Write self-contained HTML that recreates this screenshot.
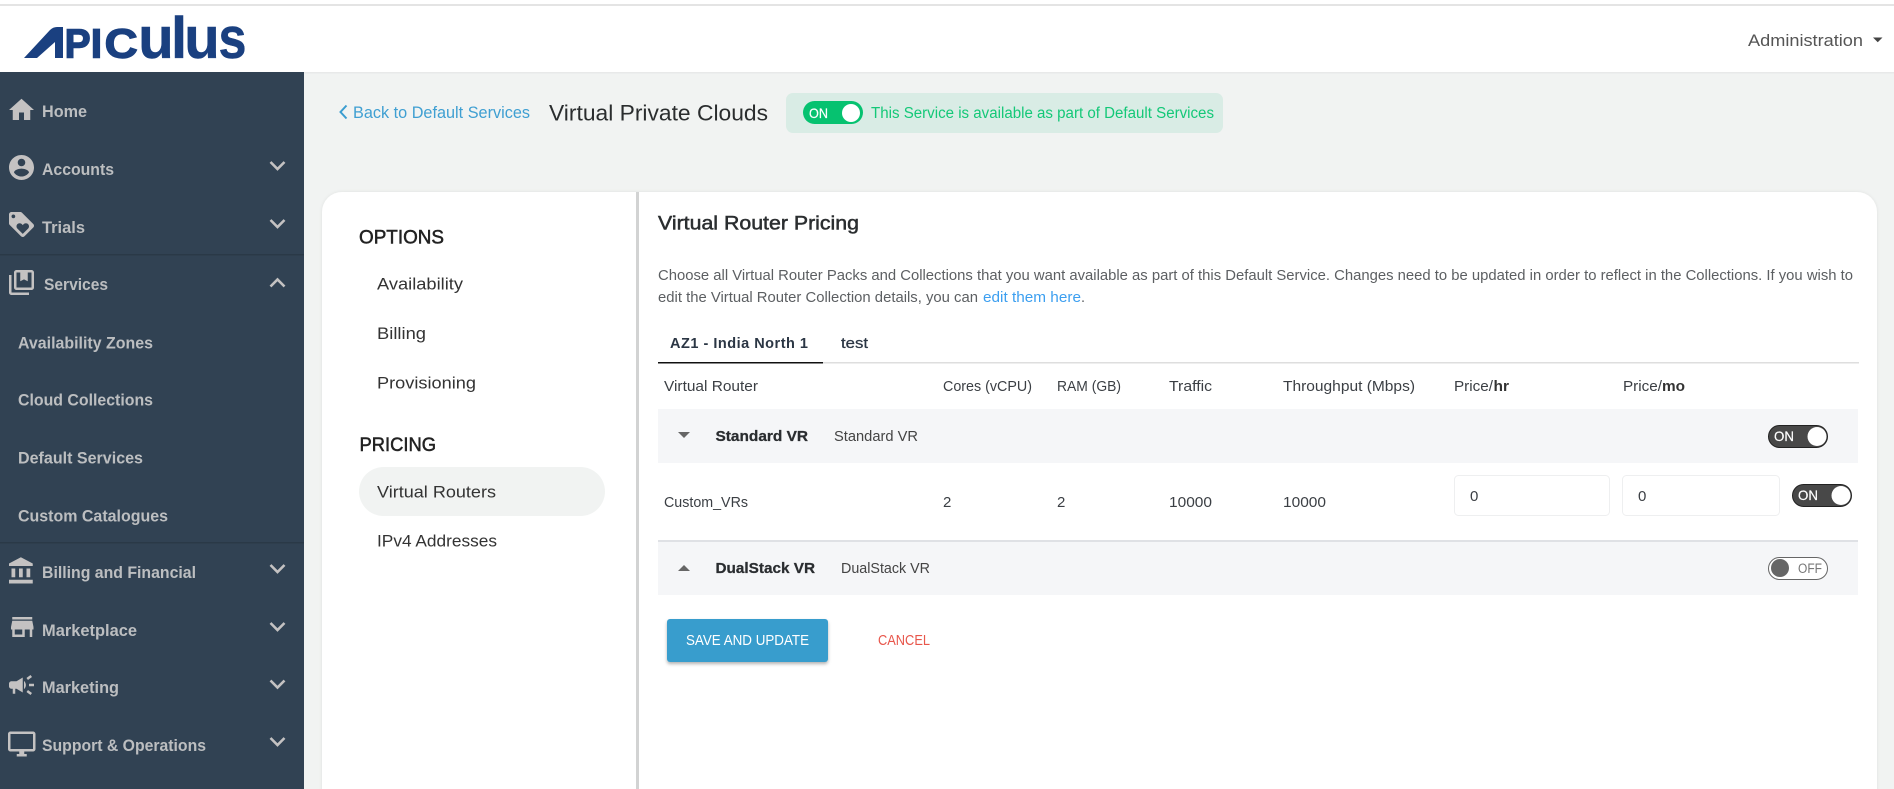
<!DOCTYPE html>
<html lang="en"><head><meta charset="utf-8"><title>Virtual Private Clouds</title>
<style>
html,body{margin:0;padding:0;width:1894px;height:789px;overflow:hidden;background:#f1f3f2}
svg{display:block}
text{font-family:"Liberation Sans",sans-serif}
.side{font-size:16.5px;font-weight:700;fill:#bcbec0}
.ic{fill:#c4c2c2}
.chev{fill:none;stroke:#c4c2c2;stroke-width:2.6}
.b{font-size:15px;fill:#3b3f44}
.d{font-size:17px;fill:#333}
.h{font-size:19px;fill:#222;stroke:#222;stroke-width:.5px}
.g{font-size:14.5px;fill:#444}
.s{font-size:14.5px;font-weight:700;fill:#2a2d30;stroke:#2a2d30;stroke-width:.25px}
.lg{font-weight:700;fill:#1a4080;stroke:#1a4080;stroke-width:.5px}
.lc{font-weight:700;fill:#1a4080;stroke:#1a4080;stroke-width:1.4px}
</style></head><body>
<svg width="1894" height="789" viewBox="0 0 1894 789" xmlns="http://www.w3.org/2000/svg">
<defs>
<filter id="sh" x="-10%" y="-20%" width="120%" height="150%"><feDropShadow dx="0" dy="2" stdDeviation="1.5" flood-color="#000" flood-opacity=".3"/></filter>
<filter id="sh2" x="-2%" y="-2%" width="104%" height="104%"><feDropShadow dx="0" dy="0" stdDeviation="1.5" flood-color="#000" flood-opacity=".08"/></filter>
</defs>
<rect width="1894" height="789" fill="#f1f3f2"/>
<rect x="0" y="0" width="1894" height="72" fill="#fff"/>
<rect x="0" y="4" width="1894" height="2" fill="#e4e4e4"/>
<rect x="0" y="72" width="1894" height="1.5" fill="#e8e9e9"/>

<!-- logo -->
<path d="M24 58L50 30Q53 27 57 27H63V58H55V42L37 58Z" fill="#1a4080"/>
<text class="lc" x="64.6" y="57.4" font-size="41" textLength="26" lengthAdjust="spacingAndGlyphs">P</text>
<text class="lc" x="90.8" y="57.4" font-size="41">I</text>
<text class="lc" x="104.6" y="57.4" font-size="41" textLength="33" lengthAdjust="spacingAndGlyphs">C</text>
<text class="lg" x="138.2" y="58" font-size="58">u</text>
<text class="lg" x="171" y="58" font-size="58">l</text>
<text class="lg" x="184.2" y="58" font-size="58">u</text>
<text class="lg" x="218.5" y="58" font-size="58" textLength="28" lengthAdjust="spacingAndGlyphs">s</text>

<text x="1748" y="46" font-size="17" fill="#555" textLength="115" lengthAdjust="spacingAndGlyphs">Administration</text>
<path d="M1873 37.5h9.5l-4.75 4.75z" fill="#444"/>

<!-- sidebar -->
<rect x="0" y="72" width="304" height="717" fill="#314253"/>
<rect x="0" y="254" width="304" height="1.5" fill="#2a3947"/>
<rect x="0" y="542" width="304" height="1.5" fill="#2a3947"/>

<g class="ic">
<path transform="translate(6.5 95) scale(1.25)" d="M10 20v-6h4v6h5v-8h3L12 3 2 12h3v8z"/>
<path transform="translate(6.5 152.5) scale(1.25)" d="M12 2C6.48 2 2 6.48 2 12s4.48 10 10 10 10-4.48 10-10S17.52 2 12 2zm0 3c1.66 0 3 1.34 3 3s-1.34 3-3 3-3-1.34-3-3 1.34-3 3-3zm0 14.2c-2.5 0-4.71-1.28-6-3.22.03-1.99 4-3.08 6-3.08 1.99 0 5.97 1.09 6 3.08-1.29 1.94-3.5 3.22-6 3.22z"/>
<path transform="translate(6.5 209.5) scale(1.25)" d="M21.41 11.58l-9-9C12.05 2.22 11.55 2 11 2H4c-1.1 0-2 .9-2 2v7c0 .55.22 1.05.59 1.42l9 9c.36.36.86.58 1.41.58.55 0 1.05-.22 1.41-.59l7-7c.37-.36.59-.86.59-1.41 0-.55-.23-1.06-.59-1.42zM5.5 7C4.67 7 4 6.33 4 5.5S4.67 4 5.5 4 7 4.67 7 5.5 6.33 7 5.5 7zm11.77 8.27L13 19.54l-4.27-4.27C8.28 14.81 8 14.19 8 13.5c0-1.38 1.12-2.5 2.5-2.5.69 0 1.32.28 1.77.74l.73.72.73-.73c.45-.45 1.08-.73 1.77-.73 1.38 0 2.5 1.12 2.5 2.5 0 .69-.28 1.32-.73 1.77z"/>
<path transform="translate(6.5 267.5) scale(1.25)" fill-rule="evenodd" d="M4 6H2v14c0 1.1.9 2 2 2h14v-2H4V6zM20 2H8c-1.1 0-2 .9-2 2v12c0 1.1.9 2 2 2h12c1.1 0 2-.9 2-2V4c0-1.1-.9-2-2-2zM8 4h3v7l3-1.5 3 1.5V4h3v12H8z"/>
<path transform="translate(6.5 556) scale(1.25)" d="M4 10v7h3v-7H4zm6 0v7h3v-7h-3zM2 22h19v-3H2v3zm14-12v7h3v-7h-3zm-4.5-9L2 6v2h19V6l-9.5-5z"/>
<path transform="translate(7.25 612) scale(1.25)" d="M20 4H4v2h16V4zm1 10v-2l-1-5H4l-1 5v2h1v6h10v-6h4v6h2v-6h1zm-9 4H6v-4h6v4z"/>
<path transform="translate(6.5 670) scale(1.25)" d="M18 11v2h4v-2h-4zm-2 6.61c.96.71 2.21 1.65 3.2 2.39.4-.53.8-1.07 1.2-1.6-.99-.74-2.24-1.68-3.2-2.4-.4.54-.8 1.08-1.2 1.61zM20.4 5.6c-.4-.53-.8-1.07-1.2-1.6-.99.74-2.24 1.68-3.2 2.4.4.53.8 1.07 1.2 1.6.96-.72 2.21-1.65 3.2-2.4zM4 9c-1.1 0-2 .9-2 2v2c0 1.1.9 2 2 2h1v4h2v-4h1l5 3V6L8 9H4zm11.5 3c0-1.33-.58-2.53-1.5-3.35v6.69c.92-.81 1.5-2.01 1.5-3.34z"/>
<path transform="translate(6.75 729) scale(1.25)" d="M21 2H3c-1.1 0-2 .9-2 2v12c0 1.1.9 2 2 2h7v2H8v2h8v-2h-2v-2h7c1.1 0 2-.9 2-2V4c0-1.1-.9-2-2-2zm0 14H3V4h18v12z"/>
</g>

<text class="side" x="42" y="117" textLength="45" lengthAdjust="spacingAndGlyphs">Home</text>
<text class="side" x="42" y="175" textLength="72" lengthAdjust="spacingAndGlyphs">Accounts</text>
<text class="side" x="42" y="233" textLength="43" lengthAdjust="spacingAndGlyphs">Trials</text>
<text class="side" x="44" y="290" textLength="64" lengthAdjust="spacingAndGlyphs">Services</text>
<text class="side" x="18" y="348.5" textLength="135" lengthAdjust="spacingAndGlyphs">Availability Zones</text>
<text class="side" x="18" y="405.5" textLength="135" lengthAdjust="spacingAndGlyphs">Cloud Collections</text>
<text class="side" x="18" y="463.5" textLength="125" lengthAdjust="spacingAndGlyphs">Default Services</text>
<text class="side" x="18" y="521.5" textLength="150" lengthAdjust="spacingAndGlyphs">Custom Catalogues</text>
<text class="side" x="42" y="578" textLength="154" lengthAdjust="spacingAndGlyphs">Billing and Financial</text>
<text class="side" x="42" y="636" textLength="95" lengthAdjust="spacingAndGlyphs">Marketplace</text>
<text class="side" x="42" y="693" textLength="77" lengthAdjust="spacingAndGlyphs">Marketing</text>
<text class="side" x="42" y="751" textLength="164" lengthAdjust="spacingAndGlyphs">Support &amp; Operations</text>

<g class="chev">
<path d="M270.5 162l7 7 7-7"/>
<path d="M270.5 220l7 7 7-7"/>
<path d="M270.5 286.5l7-7 7 7"/>
<path d="M270.5 565l7 7 7-7"/>
<path d="M270.5 623l7 7 7-7"/>
<path d="M270.5 680.5l7 7 7-7"/>
<path d="M270.5 738l7 7 7-7"/>
</g>

<!-- page header -->
<path d="M346.5 105.5l-6 6.5 6 6.5" fill="none" stroke="#3a9dd0" stroke-width="2"/>
<text x="353" y="118" font-size="16.5" fill="#3f9fd2" textLength="177" lengthAdjust="spacingAndGlyphs">Back to Default Services</text>
<text x="549" y="120.5" font-size="22" fill="#2a2d2e" textLength="219" lengthAdjust="spacingAndGlyphs">Virtual Private Clouds</text>
<rect x="786" y="93" width="437" height="40" rx="7" fill="#d9ece5"/>
<rect x="803" y="101" width="60" height="23" rx="11.5" fill="#06c270"/>
<circle cx="851" cy="113" r="9" fill="#fff"/>
<text x="809" y="118" font-size="14" fill="#fff" stroke="#fff" stroke-width=".2" textLength="19" lengthAdjust="spacingAndGlyphs">ON</text>
<text x="871" y="118" font-size="15.5" fill="#14c878" textLength="343" lengthAdjust="spacingAndGlyphs">This Service is available as part of Default Services</text>

<!-- card -->
<path d="M342 192H1857a20 20 0 0 1 20 20V800H322V212a20 20 0 0 1 20-20z" fill="#fff" filter="url(#sh2)"/>
<rect x="636" y="192" width="3" height="597" fill="#d2d3d3"/>

<!-- left menu -->
<text class="h" x="359" y="243.5" textLength="85" lengthAdjust="spacingAndGlyphs">OPTIONS</text>
<text class="d" x="377" y="289.5" textLength="86" lengthAdjust="spacingAndGlyphs">Availability</text>
<text class="d" x="377" y="339" textLength="49" lengthAdjust="spacingAndGlyphs">Billing</text>
<text class="d" x="377" y="388.5" textLength="99" lengthAdjust="spacingAndGlyphs">Provisioning</text>
<text class="h" x="359.5" y="451" textLength="76.5" lengthAdjust="spacingAndGlyphs">PRICING</text>
<rect x="359" y="467" width="246" height="49" rx="24.5" fill="#f1f3f2"/>
<text class="d" x="377" y="497.5" textLength="119" lengthAdjust="spacingAndGlyphs">Virtual Routers</text>
<text class="d" x="377" y="546.5" textLength="120" lengthAdjust="spacingAndGlyphs">IPv4 Addresses</text>

<!-- content -->
<text x="658" y="229.5" font-size="19.5" fill="#2b2e30" stroke="#2b2e30" stroke-width=".5" textLength="201" lengthAdjust="spacingAndGlyphs">Virtual Router Pricing</text>
<text x="658" y="280" font-size="14.5" fill="#5c5f62" textLength="1195" lengthAdjust="spacingAndGlyphs">Choose all Virtual Router Packs and Collections that you want available as part of this Default Service. Changes need to be updated in order to reflect in the Collections. If you wish to</text>
<text x="658" y="302" font-size="14.5" fill="#5c5f62" textLength="320" lengthAdjust="spacingAndGlyphs">edit the Virtual Router Collection details, you can</text>
<text x="983" y="302" font-size="14.5" fill="#3c9ff0" textLength="98" lengthAdjust="spacingAndGlyphs">edit them here</text>
<text x="1081" y="302" font-size="14.5" fill="#5c5f62">.</text>

<text x="670" y="348" font-size="14.5" font-weight="700" fill="#2b3644" textLength="138" lengthAdjust="spacing">AZ1 - India North 1</text>
<text x="841" y="348" font-size="14.5" fill="#2b3644" stroke="#2b3644" stroke-width=".25" textLength="27" lengthAdjust="spacingAndGlyphs">test</text>
<rect x="658" y="362" width="1201" height="1.5" fill="#dedede"/>
<rect x="658" y="362" width="165" height="1.5" fill="#111"/>

<text class="b" x="664" y="391" textLength="94" lengthAdjust="spacingAndGlyphs">Virtual Router</text>
<text class="b" x="943" y="391" textLength="89" lengthAdjust="spacingAndGlyphs">Cores (vCPU)</text>
<text class="b" x="1057" y="391" textLength="64" lengthAdjust="spacingAndGlyphs">RAM (GB)</text>
<text class="b" x="1169" y="391" textLength="43" lengthAdjust="spacingAndGlyphs">Traffic</text>
<text class="b" x="1283" y="391" textLength="132" lengthAdjust="spacingAndGlyphs">Throughput (Mbps)</text>
<text class="b" x="1454" y="391" textLength="39" lengthAdjust="spacingAndGlyphs">Price/</text>
<text x="1493.5" y="391" font-size="15" font-weight="700" fill="#333" textLength="15.5" lengthAdjust="spacingAndGlyphs">hr</text>
<text class="b" x="1623" y="391" textLength="39" lengthAdjust="spacingAndGlyphs">Price/</text>
<text x="1662" y="391" font-size="15" font-weight="700" fill="#333" textLength="23" lengthAdjust="spacingAndGlyphs">mo</text>

<rect x="658" y="409" width="1200" height="54" fill="#f5f6f8"/>
<path d="M678 432h12l-6 6z" fill="#666"/>
<text class="s" x="715.5" y="441" textLength="92.5" lengthAdjust="spacingAndGlyphs">Standard VR</text>
<text class="g" x="834" y="441" textLength="84" lengthAdjust="spacingAndGlyphs">Standard VR</text>
<rect x="1768.5" y="425.5" width="59" height="22" rx="11" fill="#484848" stroke="#222" stroke-width="1"/>
<circle cx="1817" cy="436.5" r="9.5" fill="#fff"/>
<text x="1774" y="441" font-size="14" fill="#fff" stroke="#fff" stroke-width=".2" textLength="20" lengthAdjust="spacingAndGlyphs">ON</text>

<text class="b" x="664" y="507" textLength="84" lengthAdjust="spacingAndGlyphs">Custom_VRs</text>
<text class="b" x="943" y="507">2</text>
<text class="b" x="1057" y="507">2</text>
<text class="b" x="1169" y="507" textLength="43" lengthAdjust="spacingAndGlyphs">10000</text>
<text class="b" x="1283" y="507" textLength="43" lengthAdjust="spacingAndGlyphs">10000</text>
<rect x="1454.5" y="475.5" width="155" height="40" rx="4" fill="#fff" stroke="#eeeff0"/>
<text class="b" x="1470" y="501">0</text>
<rect x="1622.5" y="475.5" width="157" height="40" rx="4" fill="#fff" stroke="#eeeff0"/>
<text class="b" x="1638" y="501">0</text>
<rect x="1792.5" y="484.5" width="59" height="22" rx="11" fill="#484848" stroke="#222" stroke-width="1"/>
<circle cx="1841" cy="495.5" r="9.5" fill="#fff"/>
<text x="1798" y="500" font-size="14" fill="#fff" stroke="#fff" stroke-width=".2" textLength="20" lengthAdjust="spacingAndGlyphs">ON</text>

<rect x="658" y="542" width="1200" height="53" fill="#f5f6f8"/>
<rect x="658" y="540" width="1200" height="2" fill="#dfe1e5"/>
<path d="M678 571h12l-6-6z" fill="#666"/>
<text class="s" x="715.5" y="573" textLength="99.5" lengthAdjust="spacingAndGlyphs">DualStack VR</text>
<text class="g" x="841" y="573" textLength="89" lengthAdjust="spacingAndGlyphs">DualStack VR</text>
<rect x="1768.5" y="557.5" width="59" height="22" rx="11" fill="#fff" stroke="#666" stroke-width="1"/>
<circle cx="1780" cy="568" r="9" fill="#666"/>
<text x="1798" y="573" font-size="13.5" fill="#777" textLength="24" lengthAdjust="spacingAndGlyphs">OFF</text>

<rect x="667" y="619" width="161" height="43" rx="3" fill="#379dcd" filter="url(#sh)"/>
<text x="686" y="645" font-size="14.5" fill="#fff" textLength="123" lengthAdjust="spacingAndGlyphs">SAVE AND UPDATE</text>
<text x="878" y="645" font-size="14.5" fill="#e8564b" textLength="52" lengthAdjust="spacingAndGlyphs">CANCEL</text>
</svg>
</body></html>
